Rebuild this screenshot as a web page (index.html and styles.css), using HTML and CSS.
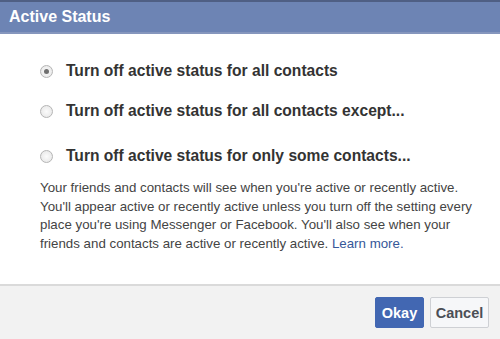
FILE: index.html
```html
<!DOCTYPE html>
<html>
<head>
<meta charset="utf-8">
<link rel="stylesheet" href="styles.css">
</head>
<body>
<div class="dialog">
  <div class="topstrip"></div>
  <div class="header">Active Status</div>
  <div class="body">
    <div class="options">
      <label class="opt"><span class="radio checked"></span><span>Turn off active status for all contacts</span></label>
      <label class="opt"><span class="radio"></span><span>Turn off active status for all contacts except...</span></label>
      <label class="opt"><span class="radio"></span><span>Turn off active status for only some contacts...</span></label>
    </div>
    <p class="desc">Your friends and contacts will see when you're active or recently active. You'll appear active or recently active unless you turn off the setting every place you're using Messenger or Facebook. You'll also see when your friends and contacts are active or recently active. <a class="link">Learn more.</a></p>
  </div>
  <div class="footer">
    <button class="btn primary">Okay</button>
    <button class="btn secondary">Cancel</button>
  </div>
</div>
</body>
</html>
```

FILE: styles.css
```css
html, body {
  margin: 0;
  padding: 0;
  width: 500px;
  height: 339px;
  overflow: hidden;
  background: #fff;
  font-family: "Liberation Sans", Arial, sans-serif;
}
.dialog {
  display: flex;
  flex-direction: column;
  height: 339px;
}
.topstrip {
  height: 2px;
  background: #4f5f84;
}
.header {
  height: 30px;
  background: #6d84b4;
  border-bottom: 2px solid #8596bd;
  color: #fff;
  font-weight: bold;
  font-size: 16px;
  line-height: 30px;
  padding-left: 9px;
}
.body {
  flex: 1;
  padding: 0 16px 0 40px;
}
.options {
  display: flex;
  flex-direction: column;
  gap: 20px;
  padding-top: 27px;
}
.opt {
  display: flex;
  align-items: center;
  gap: 13px;
  font-weight: bold;
  font-size: 15.6px;
  color: #333;
  height: 20px;
}
.opt:nth-child(3) { margin-top: 5px; }
.radio {
  width: 13px;
  height: 13px;
  border-radius: 50%;
  border: 1px solid #b5b5b5;
  background: radial-gradient(circle, #fbfbfb 0, #e4e4e4 100%);
  box-sizing: border-box;
  display: inline-flex;
  align-items: center;
  justify-content: center;
  flex: none;
}
.radio.checked::after {
  content: "";
  width: 5px;
  height: 5px;
  border-radius: 50%;
  background: #6f6f6f;
}
.desc {
  margin: 13px 0 0 0;
  font-size: 13.3px;
  line-height: 18.5px;
  color: #444;
}
.link {
  color: #365899;
}
.footer {
  height: 53px;
  border-top: 2px solid #dadada;
  background: #f2f2f2;
  display: flex;
  justify-content: flex-end;
  align-items: center;
  gap: 6px;
  padding-right: 11px;
}
.btn {
  font-family: "Liberation Sans", Arial, sans-serif;
  font-weight: bold;
  font-size: 14.5px;
  height: 31px;
  padding: 0;
  border-radius: 2px;
}
.primary {
  background: #4267b2;
  border: 1px solid #4267b2;
  color: #fff;
  width: 49px;
}
.secondary {
  background: #f6f7f9;
  border: 1px solid #ced0d4;
  color: #4b4f56;
  width: 59px;
}
```
